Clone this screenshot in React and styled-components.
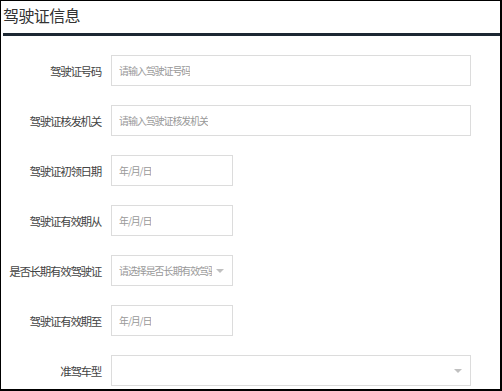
import React from "react";
import styled, { createGlobalStyle } from "styled-components";

const Global = createGlobalStyle`
  html, body { margin: 0; padding: 0; background: #fff; }
  body { font-family: "Microsoft YaHei", "Noto Sans CJK SC", sans-serif; }
  * { box-sizing: border-box; }
`;

const Frame = styled.div`
  width: 502px;
  height: 391px;
  border-style: solid;
  border-color: #000;
  border-width: 1px 2px 2px 1px;
  overflow: hidden;
  display: flex;
  flex-direction: column;
  background: #fff;
`;

const Header = styled.div`
  margin-left: 2px;
  height: 35px;
  border-bottom: 3px solid #1d2833;
  display: flex;
  align-items: flex-start;
  padding-top: 2px;
`;

const Title = styled.h2`
  margin: 0;
  font-size: 16px;
  font-weight: normal;
  letter-spacing: -0.6px;
  color: #333;
  line-height: 24px;
  font-family: "Noto Sans CJK SC", sans-serif;
`;

const Form = styled.div`
  display: flex;
  flex-direction: column;
  gap: 19px;
  padding-top: 19px;
`;

const Row = styled.div`
  display: flex;
  align-items: center;
  gap: 10px;
  height: 31px;
`;

const Label = styled.label`
  width: 100px;
  flex: none;
  text-align: right;
  font-size: 11.5px;
  letter-spacing: -1.3px;
  color: #444;
  font-family: "Noto Sans CJK SC", sans-serif;
  white-space: nowrap;
`;

const Field = styled.div`
  position: relative;
  height: 31px;
  width: ${(p) => (p.$short ? "122px" : "360px")};
  border: 1px solid #dcdcdc;
  background: #fff;
  display: flex;
  align-items: center;
  padding: 0 ${(p) => (p.$select ? "20px" : "8px")} 0 7px;
  overflow: hidden;
`;

const Placeholder = styled.span`
  font-size: 10px;
  letter-spacing: -1.1px;
  color: #999;
  white-space: nowrap;
  overflow: hidden;
  font-family: "Noto Sans CJK SC", sans-serif;
`;

const Arrow = styled.span`
  position: absolute;
  right: 8px;
  top: 50%;
  margin-top: -2px;
  width: 0;
  height: 0;
  border-left: 4px solid transparent;
  border-right: 4px solid transparent;
  border-top: 4px solid #c0c0c0;
`;

const rows = [
  { label: "驾驶证号码", ph: "请输入驾驶证号码" },
  { label: "驾驶证核发机关", ph: "请输入驾驶证核发机关" },
  { label: "驾驶证初领日期", ph: "年/月/日", short: true },
  { label: "驾驶证有效期从", ph: "年/月/日", short: true },
  { label: "是否长期有效驾驶证", ph: "请选择是否长期有效驾驶证", short: true, select: true },
  { label: "驾驶证有效期至", ph: "年/月/日", short: true },
  { label: "准驾车型", ph: "", select: true },
];

export default function App() {
  return (
    <>
      <Global />
      <Frame>
        <Header>
          <Title>驾驶证信息</Title>
        </Header>
        <Form>
          {rows.map((r) => (
            <Row key={r.label}>
              <Label>{r.label}</Label>
              <Field $short={r.short} $select={r.select}>
                {r.ph && <Placeholder>{r.ph}</Placeholder>}
                {r.select && <Arrow />}
              </Field>
            </Row>
          ))}
        </Form>
      </Frame>
    </>
  );
}
